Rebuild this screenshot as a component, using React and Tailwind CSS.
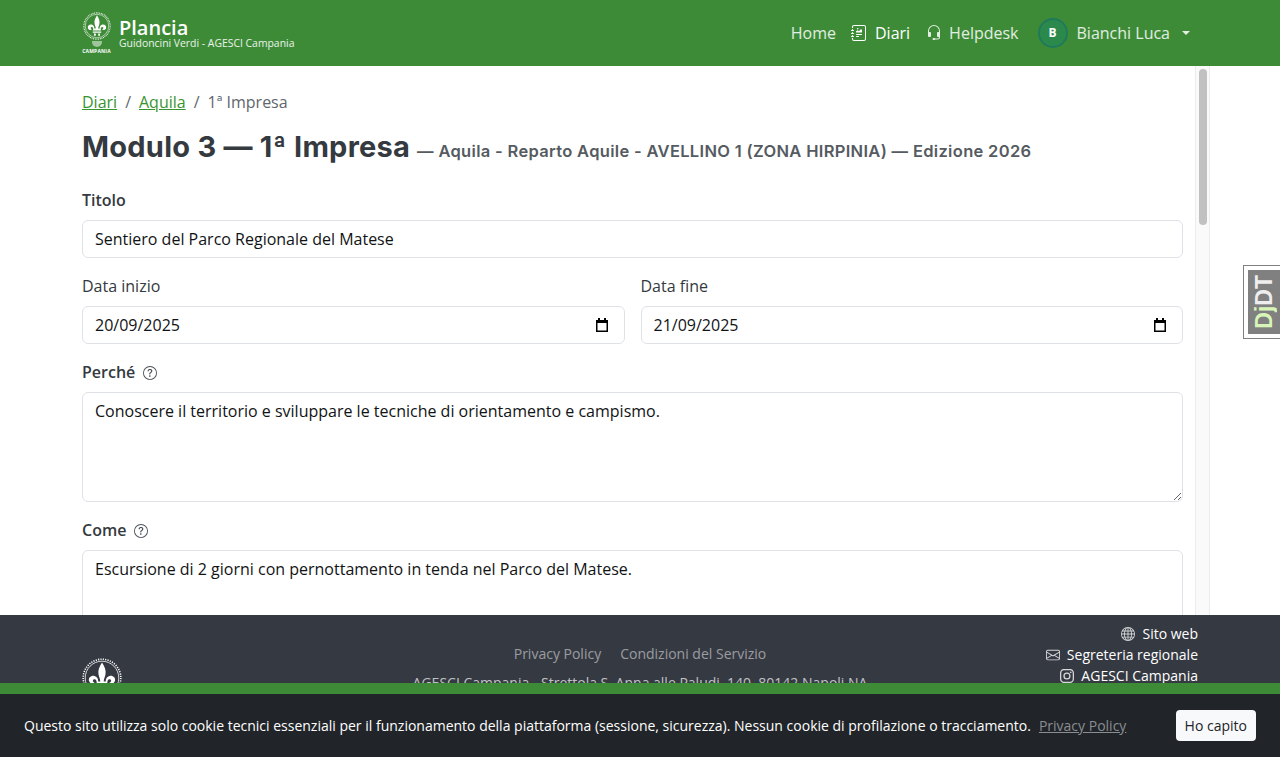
import React from 'react'
import { BsJournalRichtext, BsHeadset, BsGlobe, BsEnvelope, BsInstagram, BsQuestionCircle } from 'react-icons/bs'

const FLEUR = "M50 14 C44 24 40 32 42 42 C43 48 46 52 46 58 L41 58 C42 52 38 46 32 45 C24 44 18 50 20 57 C22 63 29 65 33 61 C31 60 28 58 29 55 C30 52 35 52 37 56 C38 59 38 62 36 65 L64 65 C62 62 62 59 63 56 C65 52 70 52 71 55 C72 58 69 60 67 61 C71 65 78 63 80 57 C82 50 76 44 68 45 C62 46 58 52 59 58 L54 58 C54 52 57 48 58 42 C60 32 56 24 50 14 Z M36 68 L64 68 L64 72 L36 72 Z M40 75 L46 75 L46 82 L40 82 Z M54 75 L60 75 L60 82 L54 82 Z"

const Emblem = ({ className }) => (
  <svg viewBox="0 0 100 100" className={className}>
    <circle cx="50" cy="50" r="47" fill="none" stroke="white" strokeWidth="4" strokeDasharray="3 3" />
    <circle cx="50" cy="50" r="42" fill="none" stroke="white" strokeWidth="2" />
    <path d={FLEUR} fill="white" transform="translate(50 48) scale(1.08) translate(-50 -48)" />
  </svg>
)

const FieldLabel = ({ children, bold, help }) => (
  <label className={`flex items-center gap-[8px] h-6 mb-2 text-[#343a40] ${bold ? 'font-semibold' : ''}`}>
    {children}
    {help && <BsQuestionCircle className="w-[14px] h-[14px] text-[#495057] mt-[2px]" />}
  </label>
)

const inputCls = "w-full h-[38px] px-[12px] border border-[#dee2e6] rounded-[6px] bg-white text-[#111315] outline-none"

const DateField = ({ label, value }) => (
  <div>
    <FieldLabel>{label}</FieldLabel>
    <div className="relative">
      <input readOnly value={value} className={inputCls} />
      <svg viewBox="0 0 16 16" className="absolute right-[15px] top-[11px] w-[16px] h-[16px]">
        <path d="M4 1h2v2h4V1h2v2h2v12H2V3h2V1z M3.5 6v7.5h9V6h-9z" fill="#000" fillRule="evenodd" />
      </svg>
    </div>
  </div>
)

const TextArea = ({ value }) => (
  <textarea
    readOnly
    value={value}
    className="block w-full h-[110px] px-[12px] py-[6px] border border-[#dee2e6] rounded-[6px] bg-white text-[#111315] outline-none resize-y"
  />
)

const App = () => {
  return (
    <div className="relative h-screen overflow-hidden flex flex-col bg-white text-[16px] leading-6 text-[#212529] font-['Open_Sans',sans-serif]">
      {/* Navbar */}
      <header className="h-[66px] shrink-0 bg-[#3d8b37] flex items-center justify-between pl-[82px] pr-[90px]">
        <div className="flex items-center gap-[8px]">
          <div className="w-[29px] flex flex-col items-center">
            <Emblem className="w-[28px] h-[28px]" />
            <div className="w-[10px] h-[6px] mt-[1px] mb-[1px] rounded-b-full bg-white/50" />
            <span className="text-[5px] leading-[6px] font-bold text-white tracking-[0.2px]">CAMPANIA</span>
          </div>
          <div className="text-white">
            <div className="text-[20px] leading-[20px] font-semibold">Plancia</div>
            <div className="text-[10.4px] leading-[11px] text-white/90">Guidoncini Verdi - AGESCI Campania</div>
          </div>
        </div>
        <nav className="flex items-center text-white/85">
          <a>Home</a>
          <a className="flex items-center ml-[15px] text-white font-medium">
            <BsJournalRichtext className="w-[16px] h-[16px] mr-[8px]" />
            Diari
          </a>
          <a className="flex items-center ml-[16px]">
            <BsHeadset className="w-[16px] h-[16px] mr-[7px]" />
            Helpdesk
          </a>
          <div className="w-[30px] h-[30px] ml-[19px] rounded-full bg-[#2b8a4b] border-2 border-[#1f7a5a] flex items-center justify-center text-white text-[12px] font-bold">B</div>
          <span className="ml-[9px]">Bianchi Luca</span>
          <span className="ml-[12px] w-0 h-0 border-x-[4px] border-x-transparent border-t-[4px] border-t-white/85" />
        </nav>
      </header>

      {/* Scrolling area */}
      <div className="flex-1 min-h-0 flex">
        <main className="w-[1195px] shrink-0 overflow-hidden pl-[82px] pr-[12px] pt-6">
          <div className="flex items-center h-6 mb-4 text-[#5f666d]">
            <a className="text-[#38942f] underline">Diari</a>
            <span className="px-2">/</span>
            <a className="text-[#38942f] underline">Aquila</a>
            <span className="px-2">/</span>
            <span>1ª Impresa</span>
          </div>
          <h1 className="flex items-baseline gap-[7px] h-[34px] mb-6 font-['Inter',sans-serif] whitespace-nowrap">
            <span className="text-[29px] leading-[33px] font-bold tracking-[0.25px] text-[#343a40]">Modulo 3 — 1ª Impresa</span>
            <span className="text-[16.5px] font-semibold tracking-[0.32px] text-[#555b61]">— Aquila - Reparto Aquile - AVELLINO 1 (ZONA HIRPINIA) — Edizione 2026</span>
          </h1>

          <div className="mb-4">
            <FieldLabel bold>Titolo</FieldLabel>
            <input readOnly value="Sentiero del Parco Regionale del Matese" className={inputCls} />
          </div>
          <div className="grid grid-cols-2 gap-4 mb-4">
            <DateField label="Data inizio" value="20/09/2025" />
            <DateField label="Data fine" value="21/09/2025" />
          </div>
          <div className="mb-4">
            <FieldLabel bold help>Perché</FieldLabel>
            <TextArea value="Conoscere il territorio e sviluppare le tecniche di orientamento e campismo." />
          </div>
          <div className="mb-4">
            <FieldLabel bold help>Come</FieldLabel>
            <TextArea value="Escursione di 2 giorni con pernottamento in tenda nel Parco del Matese." />
          </div>
        </main>
        <div className="w-[15px] shrink-0 bg-[#fafafa] border-x border-[#ececec] pt-[3px] pl-[3px]">
          <div className="w-[8px] h-[156px] rounded-full bg-[#c1c1c1]" />
        </div>
      </div>

      {/* Footer */}
      <footer className="h-[142px] shrink-0 bg-[#353942] text-[14px] leading-[21px] grid grid-cols-[1fr_auto_1fr] pl-[82px] pr-[82px] pt-[8px]">
        <div className="pt-[35px]">
          <Emblem className="w-[40px] h-[40px]" />
        </div>
        <div className="text-center pt-[20px]">
          <div className="flex justify-center gap-[19px] text-white/50">
            <a>Privacy Policy</a>
            <a>Condizioni del Servizio</a>
          </div>
          <div className="mt-[8px] text-white/70">AGESCI Campania - Strettola S. Anna alle Paludi, 140, 80142 Napoli NA</div>
        </div>
        <div className="flex flex-col items-end text-white">
          <a className="flex items-center gap-[7px]"><BsGlobe className="w-[14px] h-[14px] text-white/80" />Sito web</a>
          <a className="flex items-center gap-[7px]"><BsEnvelope className="w-[14px] h-[14px] text-white/80" />Segreteria regionale</a>
          <a className="flex items-center gap-[7px]"><BsInstagram className="w-[14px] h-[14px] text-white/80" />AGESCI Campania</a>
        </div>
      </footer>

      {/* Cookie banner */}
      <div className="absolute left-0 right-0 bottom-0 h-[74px] bg-[#212529] border-t-[11px] border-[#3d8b37] flex items-center justify-between px-6 text-[14px] text-white">
        <p>
          Questo sito utilizza solo cookie tecnici essenziali per il funzionamento della piattaforma (sessione, sicurezza). Nessun cookie di profilazione o tracciamento.
          <a className="ml-2 text-[#8a8d91] underline">Privacy Policy</a>
        </p>
        <button className="h-[31px] px-[9px] rounded-[4px] bg-[#f8f9fa] text-[#212529]">Ho capito</button>
      </div>

      {/* Debug toolbar handle */}
      <div className="absolute right-0 top-[265px] w-[37px] h-[74px] bg-white border border-[#808080] border-r-0 p-[4px] pr-0">
        <div className="w-full h-full bg-[#808080] flex items-center justify-center">
          <span className="[writing-mode:vertical-rl] rotate-180 text-[23px] leading-[26px] font-bold font-['Liberation_Sans',sans-serif] text-[#eeeeee]">
            <span className="text-[#d8f5b8]">Dj</span>DT
          </span>
        </div>
      </div>
    </div>
  )
}

export default App
